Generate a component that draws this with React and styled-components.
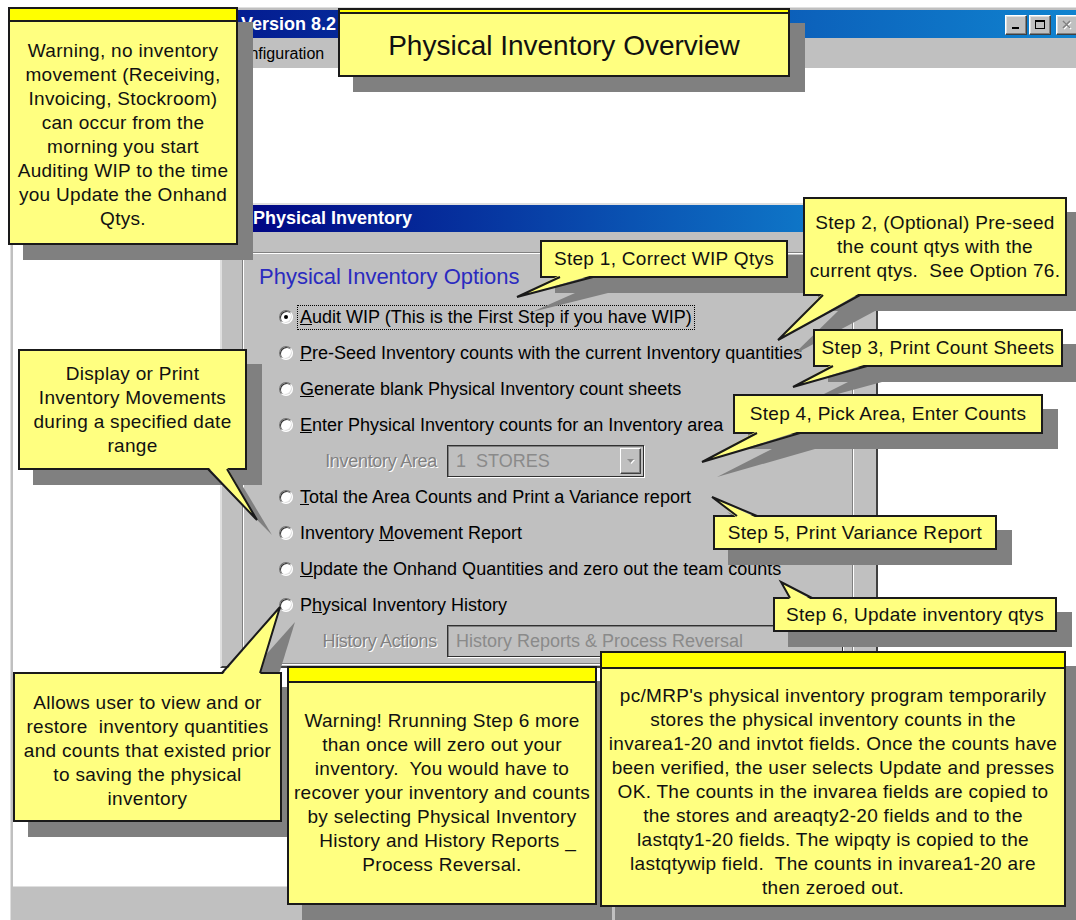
import React from "react";
import styled, { createGlobalStyle } from "styled-components";

const GlobalStyle = createGlobalStyle`
  html, body {
    margin: 0;
    padding: 0;
    background: #fff;
  }
  body {
    font-family: "Liberation Sans", Arial, sans-serif;
  }
`;

const Page = styled.div`
  position: relative;
  width: 1076px;
  height: 920px;
  overflow: hidden;
  background: #fff;
`;

/* ---------- main application window ---------- */

const MainWindow = styled.div`
  display: flex;
  flex-direction: column;
  box-sizing: border-box;
  width: 1074px;
  height: 913px;
  margin: 7px 0 0 10px;
  padding: 2px 0 0 2px;
  background: #c0c0c0;
  border-top: 1px solid #dfdfdf;
  border-left: 1px solid #dfdfdf;
`;

const TitleBar = styled.div`
  display: flex;
  align-items: center;
  flex-shrink: 0;
  height: 28px;
  padding: 1px 6px 0 228px;
  box-sizing: border-box;
  background: linear-gradient(to right, #000080, #1084d0);
  color: #fff;
  font-weight: bold;
  font-size: 18px;
`;

const Controls = styled.div`
  display: flex;
  margin-left: auto;
`;

const CtrlButton = styled.div`
  display: flex;
  align-items: center;
  justify-content: center;
  box-sizing: border-box;
  width: 22px;
  height: 20px;
  margin-left: ${(p) => p.$gap || 0}px;
  background: #c0c0c0;
  border: 1px solid;
  border-color: #fff #404040 #404040 #fff;
  box-shadow: inset -1px -1px 0 #808080, inset 1px 1px 0 #dfdfdf;
`;

const MenuBar = styled.div`
  display: flex;
  align-items: center;
  flex-shrink: 0;
  height: 30px;
  padding: 2px 0 0 216px;
  box-sizing: border-box;
  font-size: 16px;
  color: #000;
`;

const Client = styled.div`
  flex: 1;
  min-height: 0;
  box-sizing: border-box;
  padding: 135px 0 0 207px;
  background: #fff;
  overflow: hidden;
`;

const StatusBar = styled.div`
  flex-shrink: 0;
  height: 34px;
  background: #c0c0c0;
  border-top: 1px solid #dfdfdf;
  box-sizing: border-box;
`;

/* ---------- Physical Inventory child window ---------- */

const ChildWindow = styled.div`
  display: flex;
  flex-direction: column;
  box-sizing: border-box;
  width: 658px;
  height: 465px;
  background: #c0c0c0;
  border: 2px solid;
  border-color: #dfdfdf #404040 #404040 #dfdfdf;
`;

const ChildTitle = styled.div`
  display: flex;
  align-items: center;
  flex-shrink: 0;
  height: 27px;
  padding-left: 31px;
  background: linear-gradient(to right, #000080, #1084d0);
  color: #fff;
  font-weight: bold;
  font-size: 18px;
`;

const ChildBody = styled.div`
  flex: 1;
  display: flex;
  min-height: 0;
  padding: 20px 23px 2px 20px;
`;

const Panel = styled.div`
  flex: 1;
  padding: 11px 0 0 16px;
  border: 1px solid #808080;
  box-shadow: inset 1px 1px 0 #fff, 1px 1px 0 #fff;
`;

const Heading = styled.div`
  font-size: 22px;
  line-height: 26px;
  color: #2b2bbf;
`;

const OptionList = styled.div`
  display: flex;
  flex-direction: column;
  margin: 9px 0 0 20px;
`;

const OptionRow = styled.div`
  display: flex;
  align-items: center;
  gap: 7px;
  height: 36px;
  font-size: 18px;
  color: #000;
  white-space: nowrap;
`;

const Radio = styled.span`
  position: relative;
  flex-shrink: 0;
  box-sizing: border-box;
  width: 14px;
  height: 14px;
  border-radius: 50%;
  background: #fff;
  border: 1px solid;
  border-color: #707070 #fff #fff #707070;
  box-shadow: inset 1px 1px 0 #303030, inset -1px -1px 0 #dfdfdf;

  &::after {
    content: "";
    position: absolute;
    left: 4px;
    top: 4px;
    width: 4px;
    height: 4px;
    border-radius: 50%;
    background: ${(p) => (p.$checked ? "#000" : "transparent")};
  }
`;

const OptionLabel = styled.span`
  padding: 1px 2px;
  margin-left: -3px;
  border: 1px ${(p) => (p.$focused ? "dotted #000" : "solid transparent")};
`;

const SubRow = styled.div`
  display: flex;
  align-items: center;
  gap: 10px;
  height: 36px;
  padding-left: 20px;
`;

const SubLabel = styled.span`
  width: 138px;
  text-align: right;
  font-size: 18px;
  letter-spacing: -0.3px;
  color: #808080;
  text-shadow: 1px 1px 0 #fff;
  white-space: nowrap;
`;

const Combo = styled.div`
  display: flex;
  align-items: center;
  box-sizing: border-box;
  width: ${(p) => p.$w}px;
  height: 32px;
  padding: 0 2px 0 8px;
  background: #c0c0c0;
  border: 1px solid #303030;
  box-shadow: 1px 1px 0 #fff, inset 1px 1px 0 #808080;
  font-size: 18px;
  color: #8a8a8a;
  white-space: nowrap;
  overflow: hidden;
`;

const DropButton = styled.div`
  display: flex;
  align-items: center;
  justify-content: center;
  box-sizing: border-box;
  width: 21px;
  height: 26px;
  margin-left: auto;
  background: #c0c0c0;
  border: 1px solid;
  border-color: #fff #404040 #404040 #fff;
  box-shadow: inset -1px -1px 0 #808080;
`;

/* ---------- yellow callout notes ---------- */

const NoteWrap = styled.div`
  position: absolute;
  left: ${(p) => p.$x}px;
  top: ${(p) => p.$y}px;
  width: ${(p) => p.$w}px;
  height: ${(p) => p.$h}px;
`;

const NoteBox = styled.div`
  position: relative;
  display: flex;
  flex-direction: column;
  box-sizing: border-box;
  width: 100%;
  height: 100%;
  background: #ffff80;
  border: 2px solid #1a1a1a;
  box-shadow: 15px 15px 0 #808080;
`;

const NoteStrip = styled.div`
  flex-shrink: 0;
  height: ${(p) => p.$h}px;
  background: #ffff00;
  border-bottom: 2px solid #1a1a1a;
`;

const NoteText = styled.div`
  flex: 1;
  display: flex;
  flex-direction: column;
  align-items: center;
  justify-content: center;
  padding-top: ${(p) => p.$pt || 0}px;
  font-size: ${(p) => p.$size || 19}px;
  line-height: 24px;
  letter-spacing: ${(p) => (p.$ls === undefined ? 0.3 : p.$ls)}px;
  color: #111;
  text-align: center;
  white-space: pre;
`;

const TailSvg = styled.svg`
  position: absolute;
  left: 0;
  top: 0;
  overflow: visible;
  pointer-events: none;
`;

const SHADOW = 15;

const NOTES = [
  {
    id: "step1",
    x: 540, y: 240, w: 248, h: 38,
    tail: { side: "bottom", base: [[560, 278], [593, 278]], tip: [517, 297] },
    lines: ["Step 1, Correct WIP Qtys"],
  },
  {
    id: "step2",
    x: 803, y: 197, w: 264, h: 99,
    tail: { side: "bottom", base: [[823, 296], [860, 296]], tip: [778, 340] },
    lines: ["Step 2, (Optional) Pre-seed", "the count qtys with the", "current qtys.  See Option 76."],
  },
  {
    id: "step3",
    x: 813, y: 329, w: 250, h: 38,
    tail: { side: "bottom", base: [[833, 367], [867, 367]], tip: [793, 387] },
    lines: ["Step 3, Print Count Sheets"],
  },
  {
    id: "step4",
    x: 733, y: 394, w: 310, h: 40,
    tail: { side: "bottom", base: [[757, 434], [800, 434]], tip: [702, 462] },
    lines: ["Step 4, Pick Area, Enter Counts"],
  },
  {
    id: "step5",
    x: 713, y: 515, w: 284, h: 35,
    tail: { side: "top", base: [[737, 515], [757, 515]], tip: [712, 497] },
    lines: ["Step 5, Print Variance Report"],
  },
  {
    id: "step6",
    x: 773, y: 597, w: 284, h: 35,
    tail: { side: "top", base: [[790, 597], [812, 597]], tip: [781, 582] },
    lines: ["Step 6, Update inventory qtys"],
  },
  {
    id: "display",
    x: 18, y: 349, w: 229, h: 121,
    tail: { side: "bottom", base: [[208, 470], [227, 470]], tip: [257, 520] },
    lines: ["Display or Print", "Inventory Movements", "during a specified date", "range"],
  },
  {
    id: "title",
    x: 338, y: 8, w: 452, h: 69,
    strip: 2, size: 28, ls: 0, pt: 2,
    lines: ["Physical Inventory Overview"],
  },
  {
    id: "warn1",
    x: 8, y: 7, w: 230, h: 238,
    strip: 11, pt: 4,
    lines: [
      "Warning, no inventory",
      "movement (Receiving,",
      "Invoicing, Stockroom)",
      "can occur from the",
      "morning you start",
      "Auditing WIP to the time",
      "you Update the Onhand",
      "Qtys.",
    ],
  },
  {
    id: "allows",
    x: 13, y: 672, w: 269, h: 150,
    pt: 8,
    tail: { side: "top", base: [[222, 672], [260, 672]], tip: [280, 607] },
    lines: [
      "Allows user to view and or",
      "restore  inventory quantities",
      "and counts that existed prior",
      "to saving the physical",
      "inventory",
    ],
  },
  {
    id: "warn2",
    x: 287, y: 666, w: 310, h: 239,
    strip: 13,
    lines: [
      "Warning! Rrunning Step 6 more",
      "than once will zero out your",
      "inventory.  You would have to",
      "recover your inventory and counts",
      "by selecting Physical Inventory",
      "  History and History Reports _",
      "Process Reversal.",
    ],
  },
  {
    id: "pcmrp",
    x: 600, y: 651, w: 466, h: 256,
    strip: 14, pt: 10,
    lines: [
      "pc/MRP's physical inventory program temporarily",
      "stores the physical inventory counts in the",
      "invarea1-20 and invtot fields. Once the counts have",
      "been verified, the user selects Update and presses",
      "OK. The counts in the invarea fields are copied to",
      "the stores and areaqty2-20 fields and to the",
      "lastqty1-20 fields. The wipqty is copied to the",
      "lastqtywip field.  The counts in invarea1-20 are",
      "then zeroed out.",
    ],
  },
];

const pts = (list) => list.map(([a, b]) => `${a},${b}`).join(" ");

const Tail = ({ note, layer }) => {
  const { tail } = note;
  const rel = ([px, py]) => [px - note.x, py - note.y];
  const [b1, b2] = tail.base.map(rel);
  const tip = rel(tail.tip);
  const dir = tail.side === "bottom" ? -1 : 1;

  if (layer === "shadow") {
    const moved = [b1, tip, b2].map(([a, b]) => [a + SHADOW, b + SHADOW]);
    return (
      <TailSvg width={note.w} height={note.h}>
        <polygon points={pts(moved)} fill="#808080" />
      </TailSvg>
    );
  }

  return (
    <TailSvg width={note.w} height={note.h}>
      <polygon
        points={pts([[b1[0], b1[1] + dir * 3], tip, [b2[0], b2[1] + dir * 3]])}
        fill="#ffff80"
      />
      <polyline
        points={pts([[b1[0], b1[1] + dir], tip, [b2[0], b2[1] + dir]])}
        fill="none"
        stroke="#1a1a1a"
        strokeWidth="2"
        strokeLinejoin="miter"
      />
    </TailSvg>
  );
};

const Note = ({ note }) => (
  <NoteWrap $x={note.x} $y={note.y} $w={note.w} $h={note.h}>
    {note.tail && <Tail note={note} layer="shadow" />}
    <NoteBox>
      {note.strip && <NoteStrip $h={note.strip} />}
      <NoteText $size={note.size} $ls={note.ls} $pt={note.pt}>
        {note.lines.map((line) => (
          <div key={line}>{line}</div>
        ))}
      </NoteText>
    </NoteBox>
    {note.tail && <Tail note={note} layer="fill" />}
  </NoteWrap>
);

/* ---------- small drawings ---------- */

const MinGlyph = () => (
  <svg width="12" height="12" viewBox="0 0 12 12">
    <rect x="2" y="8" width="7" height="2" fill="#000" />
  </svg>
);

const MaxGlyph = () => (
  <svg width="12" height="12" viewBox="0 0 12 12">
    <rect x="1.5" y="1.5" width="9" height="8" fill="none" stroke="#000" strokeWidth="1" />
    <rect x="1" y="1" width="10" height="2" fill="#000" />
  </svg>
);

const CloseGlyph = () => (
  <svg width="12" height="12" viewBox="0 0 12 12">
    <path d="M3 3 L10 10 M10 3 L3 10" stroke="#fff" strokeWidth="1.6" />
    <path d="M2 2 L9 9 M9 2 L2 9" stroke="#808080" strokeWidth="1.6" />
  </svg>
);

const DownArrow = () => (
  <svg width="9" height="6" viewBox="0 0 9 6">
    <path d="M1 1 H8 L4.5 5 Z" fill="#fff" transform="translate(1 1)" />
    <path d="M1 1 H8 L4.5 5 Z" fill="#8c8c8c" />
  </svg>
);

const Option = ({ checked, focused, children }) => (
  <OptionRow>
    <Radio $checked={checked} />
    <OptionLabel $focused={focused}>{children}</OptionLabel>
  </OptionRow>
);

export default function App() {
  return (
    <Page>
      <GlobalStyle />
      <MainWindow>
        <TitleBar>
          <span>Version 8.2</span>
          <Controls>
            <CtrlButton>
              <MinGlyph />
            </CtrlButton>
            <CtrlButton $gap={2}>
              <MaxGlyph />
            </CtrlButton>
            <CtrlButton $gap={5}>
              <CloseGlyph />
            </CtrlButton>
          </Controls>
        </TitleBar>
        <MenuBar>Configuration</MenuBar>
        <Client>
          <ChildWindow>
            <ChildTitle>Physical Inventory</ChildTitle>
            <ChildBody>
              <Panel>
                <Heading>Physical Inventory Options</Heading>
                <OptionList>
                  <Option checked focused>
                    <u>A</u>udit WIP (This is the First Step if you have WIP)
                  </Option>
                  <Option>
                    <u>P</u>re-Seed Inventory counts with the current Inventory quantities
                  </Option>
                  <Option>
                    <u>G</u>enerate blank Physical Inventory count sheets
                  </Option>
                  <Option>
                    <u>E</u>nter Physical Inventory counts for an Inventory area
                  </Option>
                  <SubRow>
                    <SubLabel>Inventory Area</SubLabel>
                    <Combo $w={197}>
                      1&nbsp;&nbsp;STORES
                      <DropButton>
                        <DownArrow />
                      </DropButton>
                    </Combo>
                  </SubRow>
                  <Option>
                    <u>T</u>otal the Area Counts and Print a Variance report
                  </Option>
                  <Option>
                    Inventory <u>M</u>ovement Report
                  </Option>
                  <Option>
                    <u>U</u>pdate the Onhand Quantities and zero out the team counts
                  </Option>
                  <Option>
                    P<u>h</u>ysical Inventory History
                  </Option>
                  <SubRow>
                    <SubLabel>History Actions</SubLabel>
                    <Combo $w={396}>History Reports &amp; Process Reversal</Combo>
                  </SubRow>
                </OptionList>
              </Panel>
            </ChildBody>
          </ChildWindow>
        </Client>
        <StatusBar />
      </MainWindow>

      {NOTES.map((note) => (
        <Note key={note.id} note={note} />
      ))}
    </Page>
  );
}
